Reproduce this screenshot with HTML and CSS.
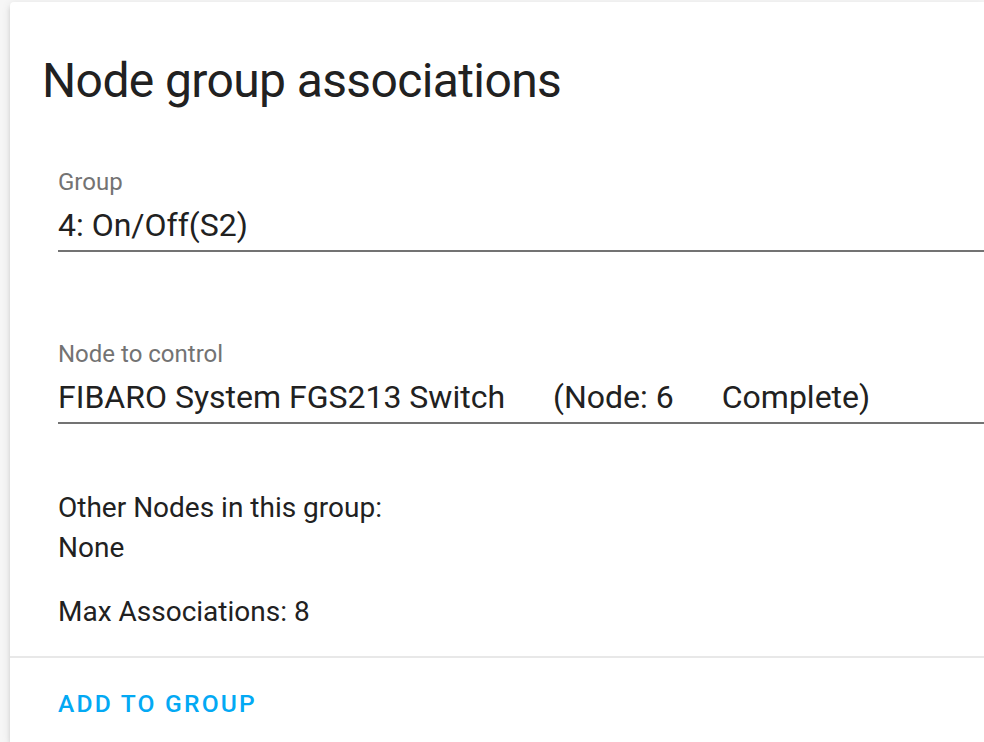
FILE: index.html
```html
<!DOCTYPE html>
<html>
<head>
<meta charset="utf-8">
<link rel="stylesheet" href="styles.css">
</head>
<body>
<div class="card">
  <h1 class="card-header">Node group associations</h1>
  <div class="card-content">
    <div class="field field-group">
      <div class="field-label">Group</div>
      <div class="field-value">4: On/Off(S2)</div>
    </div>
    <div class="field field-node">
      <div class="field-label">Node to control</div>
      <div class="field-value"><span class="gap">FIBARO System FGS213 Switch</span><span class="gap">(Node: 6</span><span>Complete)</span></div>
    </div>
    <div class="info">
      <div>Other Nodes in this group:</div>
      <div>None</div>
    </div>
    <div class="info max">Max Associations: 8</div>
  </div>
  <div class="card-actions">
    <button class="btn">Add to group</button>
  </div>
</div>
</body>
</html>
```
FILE: styles.css
```css
html, body {
  margin: 0;
  padding: 0;
  background: #f6f6f6;
  overflow: hidden;
  width: 984px;
  height: 742px;
}
body {
  font-family: Roboto, "Noto Sans", sans-serif;
  color: #212121;
}
.card {
  margin: 2px 0 0 10px;
  width: 974px;
  height: 740px;
  overflow: hidden;
  background: #fff;
  border-radius: 4px 0 0 0;
  box-shadow: 0 4px 4px 0 rgba(0,0,0,0.10), 0 2px 10px 0 rgba(0,0,0,0.10), 0 6px 2px -4px rgba(0,0,0,0.08);
}
.card-header {
  margin: 0;
  padding: 47px 32px 0 32px;
  font-size: 48px;
  font-weight: 400;
  line-height: 64px;
  letter-spacing: -0.62px;
}
.card-content {
  padding: 0 0 0 48px;
}
.field {
  border-bottom: 2px solid #737373;
}
.field-group {
  margin-top: 53px;
}
.field-node {
  margin-top: 86px;
}
.field-label {
  font-size: 24px;
  line-height: 32px;
  color: #737373;
}
.field-value {
  font-size: 32px;
  line-height: 48px;
  margin-top: 3px;
  padding-bottom: 1px;
  white-space: pre;
}
.gap {
  margin-right: 48px;
}
.info {
  font-size: 28px;
  line-height: 40px;
}
.field-node + .info {
  margin-top: 64px;
}
.max {
  margin-top: 24px;
}
.card-actions {
  margin-top: 24px;
  border-top: 2px solid #e8e8e8;
  padding: 10px 16px 16px 32px;
}
.btn {
  border: 0;
  background: none;
  font-family: Roboto, "Noto Sans", sans-serif;
  font-weight: 500;
  font-size: 24.6px;
  letter-spacing: 0.0892em;
  text-transform: uppercase;
  color: #03a9f4;
  padding: 0 16px;
  height: 72px;
  line-height: 72px;
  cursor: pointer;
}
```
